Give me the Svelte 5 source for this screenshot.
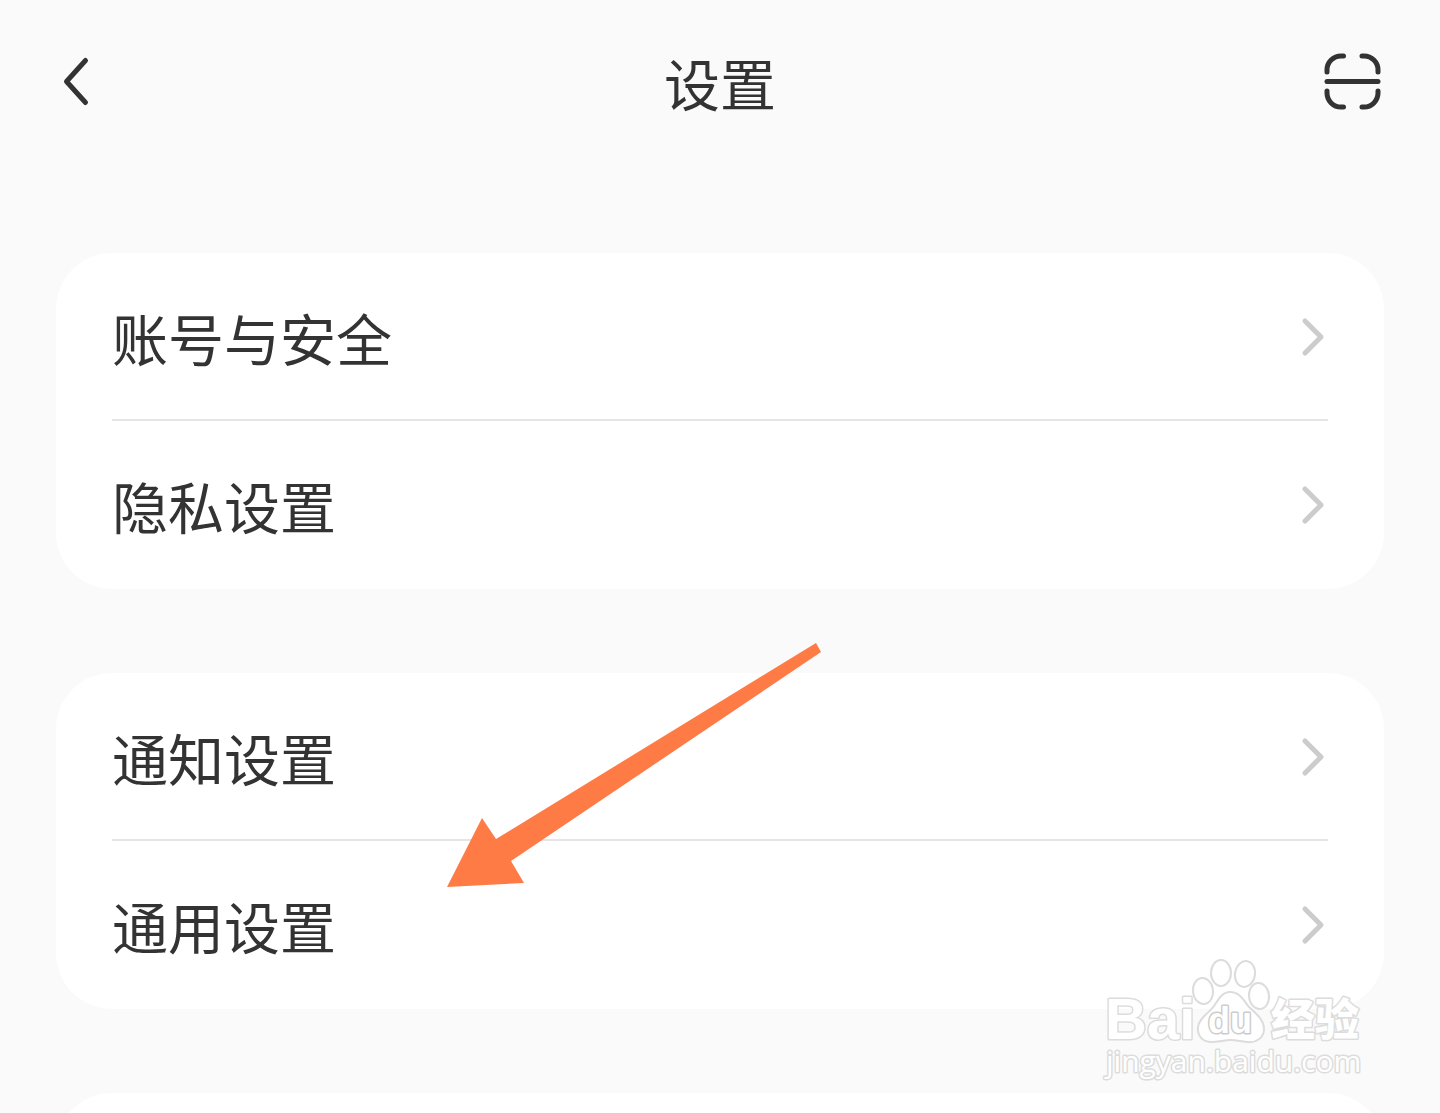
<script lang="ts">
	const groups = [
		[
			{ label: '账号与安全', href: '#account' },
			{ label: '隐私设置', href: '#privacy' }
		],
		[
			{ label: '通知设置', href: '#notifications' },
			{ label: '通用设置', href: '#general' }
		]
	];
</script>

<div class="page">
	<header class="topbar">
		<button class="icon-btn back" aria-label="返回">
			<svg width="32" height="56" viewBox="0 0 32 56" aria-hidden="true">
				<path d="M25.500 6.500 L6.500 27.500 L25.500 48.500" />
			</svg>
		</button>
		<h1>设置</h1>
		<button class="icon-btn scan" aria-label="扫一扫">
			<svg width="64" height="64" viewBox="0 0 64 64" aria-hidden="true">
				<path d="M7 22V20A14 14 0 0 1 21 6H23.500 M42 6H44A14 14 0 0 1 58 20V22 M7 41V43A14 14 0 0 0 21 57H23.500 M42 57H44A14 14 0 0 0 58 43V41 M7 31.500H58" />
			</svg>
		</button>
	</header>

	<main>
		{#each groups as group, i}
			<nav class="card">
				{#each group as item}
					<a class="row" href={item.href}>
						<span>{item.label}</span>
						<svg class="chevron" width="28" height="40" viewBox="0 0 28 40" aria-hidden="true">
							<path d="M5 4 L21 20 L5 36" />
						</svg>
					</a>
				{/each}
				{#if i === 1}
					<svg class="arrow" width="376" height="246" viewBox="0 0 376 246" aria-hidden="true">
						<path d="M369 0 L374 9 L64 218 L77 240 L0 244 L35 175 L49 196 Z" />
					</svg>
				{/if}
			</nav>
		{/each}
		<div class="card next"></div>
	</main>

	<svg class="watermark" width="280" height="144" viewBox="0 0 280 144" aria-label="Baidu 经验">
		<text class="brand" x="12" y="89">Bai</text>
		<ellipse cx="110" cy="41" rx="10" ry="13" transform="rotate(-6 110 41)" />
		<ellipse cx="128" cy="23" rx="10" ry="13" />
		<ellipse cx="152" cy="24" rx="10" ry="13" transform="rotate(10 152 24)" />
		<ellipse cx="166" cy="46" rx="10" ry="13" transform="rotate(-6 166 46)" />
		<path d="M137 42 C147 42 151 51 156 57 C162 63 171 69 171 79 C171 88 163 93 155 92 C147 91 142 90 137 90 C131 90 126 92 118 92 C110 92 104 86 105 77 C106 68 116 63 121 56 C125 50 129 42 137 42 Z" />
		<text class="du" x="115" y="83">du</text>
		<text class="cn" x="178" y="86">经验</text>
		<text class="site" x="13" y="122">jingyan.baidu.com</text>
	</svg>
</div>

<style>
	:global(body) {
		margin: 0;
		background: #fafafa;
	}

	.page {
		position: relative;
		height: 100vh;
		overflow: hidden;
		background: #fafafa;
		color: #333;
		font-family: 'Noto Sans CJK SC', sans-serif;
	}

	.topbar {
		display: grid;
		grid-template-columns: 1fr auto 1fr;
		align-items: center;
		height: 164px;
		padding: 0 56px;
	}

	h1 {
		margin: 0;
		font-size: 56px;
		font-weight: 400;
		line-height: 80px;
	}

	.icon-btn {
		display: flex;
		padding: 0;
		border: 0;
		background: none;
		cursor: pointer;
	}

	.icon-btn path {
		fill: none;
		stroke: #333;
		stroke-width: 5;
		stroke-linecap: round;
		stroke-linejoin: round;
	}

	.back {
		justify-self: start;
		padding-left: 4px;
	}

	.scan {
		justify-self: end;
	}

	main {
		display: flex;
		flex-direction: column;
		gap: 84px;
		padding: 89px 56px 0;
	}

	.card {
		position: relative;
		border-radius: 56px;
		background: #fff;
	}

	/* next group, only its top edge is in view */
	.next {
		height: 168px;
	}

	.row {
		display: flex;
		align-items: center;
		justify-content: space-between;
		height: 168px;
		margin: 0 56px;
		color: inherit;
		font-size: 56px;
		line-height: 80px;
		text-decoration: none;
	}

	.row:first-child {
		box-shadow: inset 0 -2px #e5e5e5;
	}

	.chevron path {
		fill: none;
		stroke: #ccc;
		stroke-width: 5;
		stroke-linecap: round;
		stroke-linejoin: round;
	}

	.arrow {
		position: absolute;
		top: -30px;
		left: 391px;
		fill: #ff7b46;
		pointer-events: none;
	}

	.watermark {
		position: absolute;
		right: 67px;
		bottom: 19px;
		fill: #fff;
		stroke: #dcdcdc;
		stroke-width: 2;
		pointer-events: none;
	}

	.watermark text {
		paint-order: stroke;
		stroke-width: 3;
		stroke-linejoin: round;
	}

	.brand {
		font: bold 58px 'Liberation Sans', sans-serif;
	}

	.watermark .du {
		font: bold 36px 'Liberation Sans', sans-serif;
		stroke: #ccc;
	}

	.cn {
		font: 900 44px 'Noto Sans CJK SC', sans-serif;
	}

	.site {
		font: 30px 'Open Sans', sans-serif;
	}
</style>
